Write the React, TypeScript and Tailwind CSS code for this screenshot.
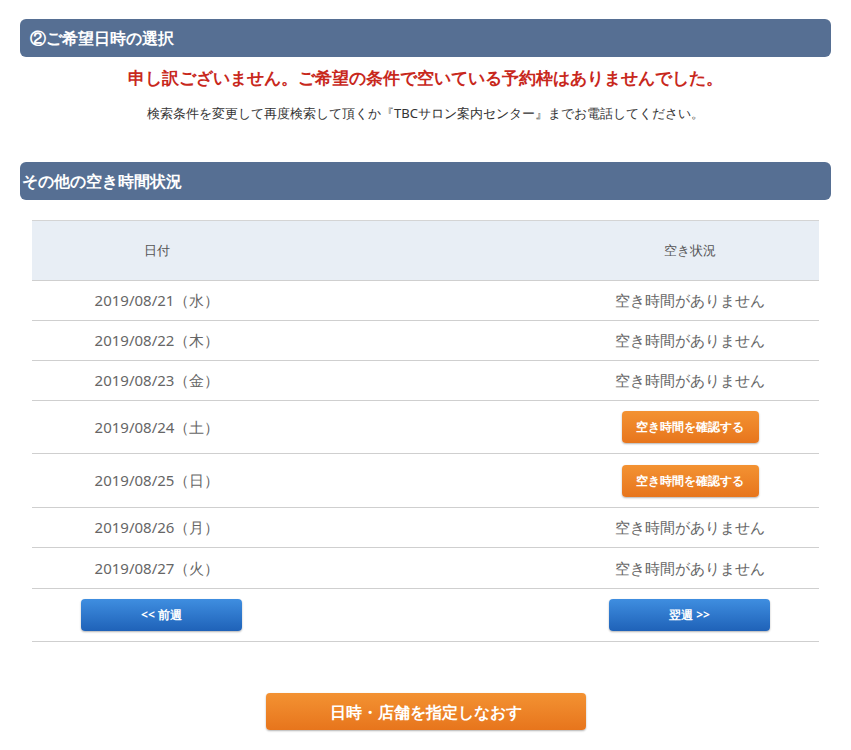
const rows: { date: string; open: boolean; h: string }[] = [
  { date: '2019/08/21（水）', open: false, h: 'h-[40px]' },
  { date: '2019/08/22（木）', open: false, h: 'h-[40px]' },
  { date: '2019/08/23（金）', open: false, h: 'h-[40px]' },
  { date: '2019/08/24（土）', open: true, h: 'h-[53px]' },
  { date: '2019/08/25（日）', open: true, h: 'h-[54px]' },
  { date: '2019/08/26（月）', open: false, h: 'h-[40px]' },
  { date: '2019/08/27（火）', open: false, h: 'h-[41px]' },
];

const blueBtn =
  'w-[161px] h-[32px] rounded-[4px] bg-gradient-to-b from-[#3f8ee0] to-[#1f62b8] text-white text-[12px] font-bold flex items-center justify-center shadow-[0_1px_2px_rgba(0,0,0,0.3)]';

export default function App() {
  return (
    <div className="w-[851px] bg-white pt-[19px] pb-[17px] text-[#333] font-['Meiryo','Noto_Sans_CJK_JP',sans-serif]">
      <div className="mx-[20px] h-[38px] rounded-[6px] bg-[#566f93] text-white text-[16px] font-bold flex items-center px-[10px]">
        ②ご希望日時の選択
      </div>
      <p className="mt-[9px] text-center text-[#c8281c] text-[17px] font-bold leading-[24px]">
        申し訳ございません。ご希望の条件で空いている予約枠はありませんでした。
      </p>
      <p className="mt-[13px] text-center text-[13px] leading-[20px]">
        検索条件を変更して再度検索して頂くか『TBCサロン案内センター』までお電話してください。
      </p>
      <div className="mt-[39px] mx-[20px] h-[38px] rounded-[6px] bg-[#566f93] text-white text-[16px] font-bold flex items-center px-[2px]">
        その他の空き時間状況
      </div>
      <div className="mx-[32px] mt-[20px] border-t border-[#d4d4d4]">
        <div className="h-[60px] bg-[#e8eef5] border-b border-[#cfcfcf] grid grid-cols-[250px_1fr_258px] items-center text-[13px] text-[#555]">
          <div className="text-center">日付</div>
          <div />
          <div className="text-center">空き状況</div>
        </div>
        {rows.map((r) => (
          <div key={r.date} className={`${r.h} border-b border-[#cfcfcf] grid grid-cols-[250px_1fr_258px] items-center text-[15px] text-[#666]`}>
            <div className="text-center">{r.date}</div>
            <div />
            <div className="flex justify-center">
              {r.open ? (
                <button className="w-[137px] h-[32px] rounded-[4px] bg-gradient-to-b from-[#f39232] to-[#e7751c] text-white text-[12px] font-bold shadow-[0_1px_2px_rgba(0,0,0,0.3)]">
                  空き時間を確認する
                </button>
              ) : (
                <span>空き時間がありません</span>
              )}
            </div>
          </div>
        ))}
        <div className="h-[53px] border-b border-[#cfcfcf] flex items-center justify-between pl-[49px] pr-[49px]">
          <button className={blueBtn}>&lt;&lt; 前週</button>
          <button className={blueBtn}>翌週 &gt;&gt;</button>
        </div>
      </div>
      <div className="mt-[51px] flex justify-center">
        <button className="w-[320px] h-[37px] rounded-[4px] bg-gradient-to-b from-[#f39232] to-[#e7751c] text-white text-[16px] font-bold shadow-[0_1px_2px_rgba(0,0,0,0.3)]">
          日時・店舗を指定しなおす
        </button>
      </div>
    </div>
  );
}
